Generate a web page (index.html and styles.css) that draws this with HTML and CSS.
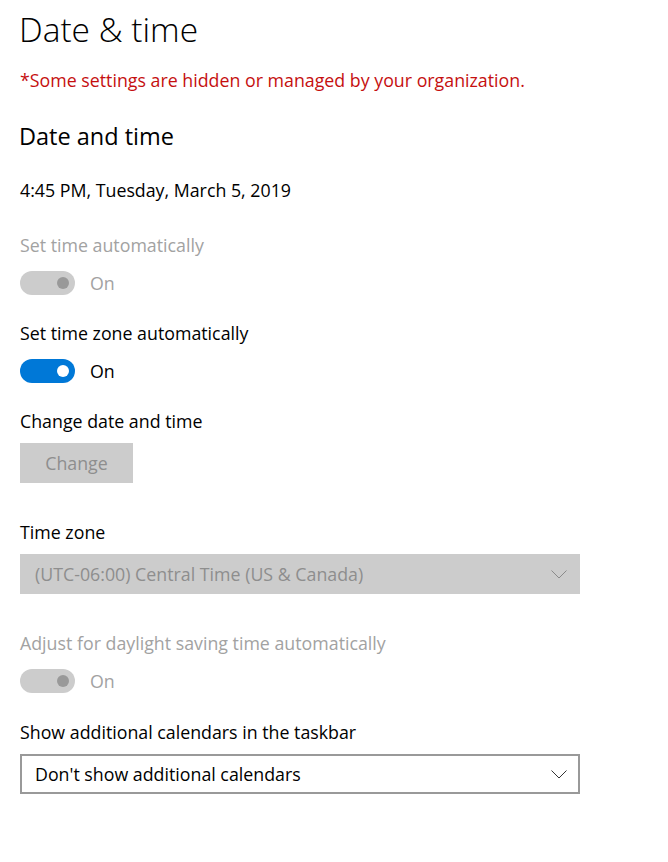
FILE: index.html
```html
<!DOCTYPE html>
<html lang="en">
<head>
    <meta charset="UTF-8">
    <title>Date &amp; time</title>
    <link rel="stylesheet" href="styles.css">
</head>
<body>
    <div class="page">
        <h1 class="title">Date &amp; time</h1>
        <p class="notice">*Some settings are hidden or managed by your organization.</p>

        <h2 class="subtitle">Date and time</h2>
        <p class="now">4:45 PM, Tuesday, March 5, 2019</p>

        <div class="setting">
            <div class="label disabled">Set time automatically</div>
            <div class="toggle-row">
                <span class="toggle off-disabled"><span class="knob"></span></span>
                <span class="state disabled">On</span>
            </div>
        </div>

        <div class="setting after-toggle">
            <div class="label">Set time zone automatically</div>
            <div class="toggle-row">
                <span class="toggle on"><span class="knob"></span></span>
                <span class="state">On</span>
            </div>
        </div>

        <div class="setting after-toggle">
            <div class="label">Change date and time</div>
            <button class="btn" disabled>Change</button>
        </div>

        <div class="setting after-box">
            <div class="label">Time zone</div>
            <div class="select select-disabled">
                <span>(UTC-06:00) Central Time (US &amp; Canada)</span>
                <svg class="chev" width="16" height="9" viewBox="0 0 16 9"><path d="M0.5 0.5 L8 8 L15.5 0.5" fill="none" stroke="currentColor" stroke-width="1"/></svg>
            </div>
        </div>

        <div class="setting after-box">
            <div class="label disabled">Adjust for daylight saving time automatically</div>
            <div class="toggle-row">
                <span class="toggle off-disabled"><span class="knob"></span></span>
                <span class="state disabled">On</span>
            </div>
        </div>

        <div class="setting after-toggle last">
            <div class="label">Show additional calendars in the taskbar</div>
            <div class="select">
                <span>Don't show additional calendars</span>
                <svg class="chev" width="16" height="9" viewBox="0 0 16 9"><path d="M0.5 0.5 L8 8 L15.5 0.5" fill="none" stroke="currentColor" stroke-width="1"/></svg>
            </div>
        </div>
    </div>
</body>
</html>
```

FILE: styles.css
```css
body {
    margin: 0;
    background: #fff;
    font-family: 'Open Sans', 'Noto Sans', sans-serif;
    color: #000;
}

.page {
    padding: 0 20px;
    width: 560px;
}

.title {
    font-size: 33.5px;
    font-weight: 300;
    margin: 0 0 0 -1px;
    line-height: 58px;
}

.notice {
    color: #c50f0f;
    font-size: 17.8px;
    margin: 10px 0 0;
    line-height: 24px;
}

.subtitle {
    font-size: 23.5px;
    font-weight: 400;
    margin: 27px 0 0 -1px;
    line-height: 34px;
}

.now {
    font-size: 17.8px;
    margin: 25px 0 0;
    line-height: 24px;
}

.setting {
    margin-top: 31px;
}

.after-toggle {
    margin-top: 26px;
}

.after-box {
    margin-top: 37px;
}

.last {
    margin-top: 27px;
}

.label {
    font-size: 17.8px;
    line-height: 24px;
}

.disabled {
    color: #a2a2a2;
}

.toggle-row {
    display: flex;
    align-items: center;
    gap: 15px;
    margin-top: 14px;
    height: 24px;
}

.toggle {
    display: flex;
    align-items: center;
    justify-content: flex-end;
    box-sizing: border-box;
    width: 55px;
    height: 24px;
    border-radius: 12px;
    padding-right: 6px;
}

.toggle .knob {
    width: 12px;
    height: 12px;
    border-radius: 50%;
}

.toggle.on {
    background: #0078d7;
}

.toggle.on .knob {
    background: #fff;
}

.toggle.off-disabled {
    background: #cccccc;
}

.toggle.off-disabled .knob {
    background: #999;
}

.state {
    font-size: 17.8px;
    line-height: 24px;
}

.btn {
    display: block;
    margin-top: 10px;
    width: 113px;
    height: 40px;
    border: none;
    background: #cccccc;
    color: #8e8e8e;
    font-family: inherit;
    font-size: 17.8px;
    padding: 0;
}

.select {
    display: flex;
    align-items: center;
    justify-content: space-between;
    box-sizing: border-box;
    margin-top: 10px;
    height: 40px;
    border: 2px solid #999;
    padding: 0 11px 0 13px;
    font-size: 17.8px;
    color: #000;
}

.select-disabled {
    background: #cccccc;
    border-color: #cccccc;
    color: #8e8e8e;
}

.chev {
    color: #333;
}

.select-disabled .chev {
    color: #8a8a8a;
}
```
